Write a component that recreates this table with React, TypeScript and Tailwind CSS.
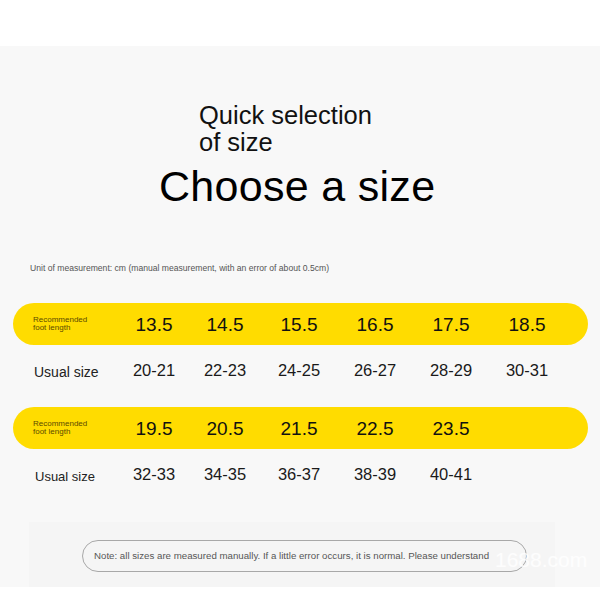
const lengths1 = ['13.5', '14.5', '15.5', '16.5', '17.5', '18.5'];
const sizes1 = ['20-21', '22-23', '24-25', '26-27', '28-29', '30-31'];
const lengths2 = ['19.5', '20.5', '21.5', '22.5', '23.5'];
const sizes2 = ['32-33', '34-35', '36-37', '38-39', '40-41'];

// column widths, tuned to the picture
const colW = ['w-[72px]', 'w-[70px]', 'w-[78px]', 'w-[74px]', 'w-[78px]', 'w-[74px]'];

const SizeTable = ({lengths, sizes, small}: {lengths: string[]; sizes: string[]; small?: boolean}) => {
  return (
    <div>
      {/* yellow bar */}
      <div className="mx-[13px] mr-[12px] h-[42px] rounded-full bg-[#ffdc00] flex items-center">
        <div className="pl-[20px] w-[105px] text-[8px] leading-[8px] text-[#5c4b00]">
          Recommended
          <br />
          foot length
        </div>
        {lengths.map((l, i) => (
          <div key={l} className={`${colW[i]} text-center text-[19px] leading-none text-[#111] pt-[2px]`}>
            {l}
          </div>
        ))}
      </div>
      {/* usual size row */}
      <div className="mx-[13px] h-[56px] flex items-center">
        <div
          className={
            small
              ? 'pl-[22px] w-[105px] text-[13px] text-[#222]'
              : 'pl-[21px] w-[105px] text-[14px] text-[#222]'
          }
        >
          Usual size
        </div>
        {sizes.map((s, i) => (
          <div key={s} className={`${colW[i]} text-center text-[16.5px] text-[#1a1a1a] pb-[6px]`}>
            {s}
          </div>
        ))}
      </div>
    </div>
  );
};

export default function App() {
  return (
    <div className="w-[600px] h-[600px] bg-white overflow-hidden" style={{fontFamily: '"Liberation Sans", Arial, sans-serif'}}>
      <div className="h-[46px] bg-white" />
      <div className="h-[541px] bg-[#f8f8f8] flex flex-col">
        {/* title */}
        <div className="pt-[56px] pl-[199px] text-[25.5px] leading-[27px] text-[#111]">
          Quick selection
          <br />
          of size
        </div>
        <div className="mt-[9px] pl-[159px] text-[43px] leading-[43px] text-black tracking-[0.3px]">
          Choose a size
        </div>

        <div className="mt-[54px] pl-[30px] text-[8.6px] text-[#555]">
          Unit of measurement: cm (manual measurement, with an error of about 0.5cm)
        </div>

        <div className="mt-[28px]">
          <SizeTable lengths={lengths1} sizes={sizes1} />
        </div>
        <div className="mt-[6px]">
          <SizeTable lengths={lengths2} sizes={sizes2} small />
        </div>

        {/* note */}
        <div className="mt-auto ml-[29px] w-[526px] h-[65px] bg-[#f5f5f5] pt-[18px] relative">
          <div className="ml-[53px] w-[445px] h-[32px] rounded-full border border-[#a8a8a8] flex items-center pl-[11px] text-[9.7px] text-[#555]">
            Note: all sizes are measured manually. If a little error occurs, it is normal. Please understand
          </div>
          <div className="absolute left-[466px] top-[27px] text-[21px] leading-none text-white/80 whitespace-nowrap">
            1688.com
          </div>
        </div>
      </div>
      <div className="h-[13px] bg-white" />
    </div>
  );
}
